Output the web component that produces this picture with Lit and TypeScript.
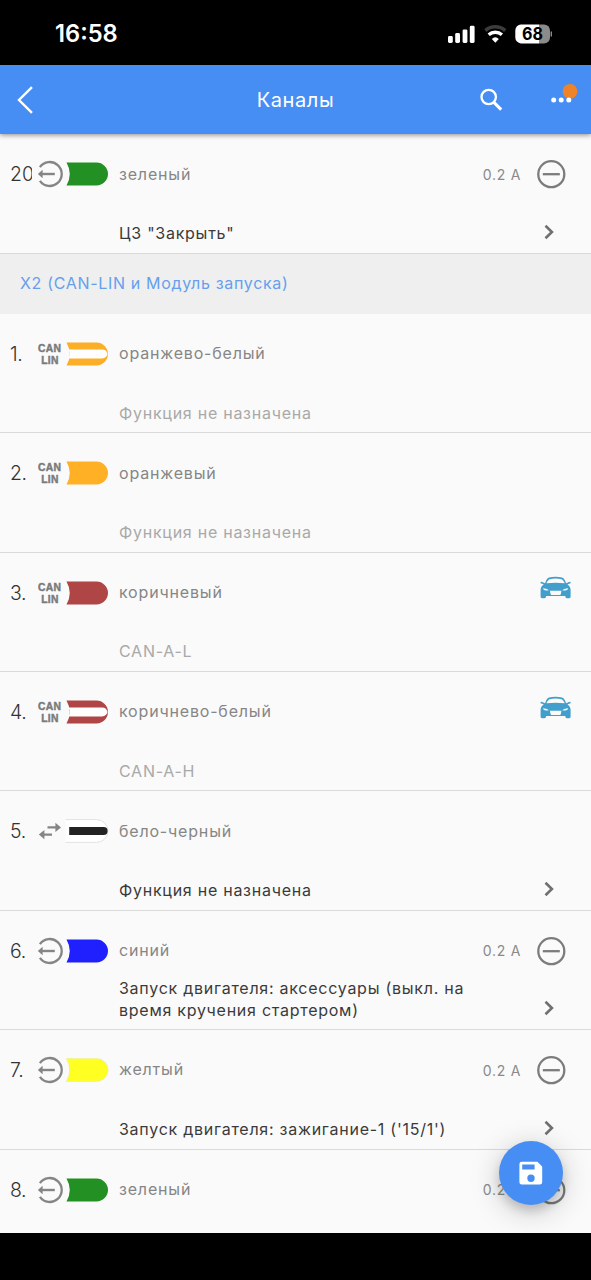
import { LitElement, html, svg, css, nothing } from "lit";
import { customElement, property } from "lit/decorators.js";

type Kind = "out" | "can" | "both";

interface Channel {
  n: string;
  kind: Kind;
  color: string;
  stripe?: string;
  outline?: string;
  name: string;
  fn: string;
  muted?: boolean;
  amps?: string;
  car?: boolean;
}

const BEFORE: Channel[] = [
  { n: "20.", kind: "out", color: "#229022", name: "зеленый", fn: 'ЦЗ "Закрыть"', amps: "0.2 A" },
];

const AFTER: Channel[] = [
  { n: "1.", kind: "can", color: "#fbae26", stripe: "#ffffff", name: "оранжево-белый", fn: "Функция не назначена", muted: true },
  { n: "2.", kind: "can", color: "#ffb024", name: "оранжевый", fn: "Функция не назначена", muted: true },
  { n: "3.", kind: "can", color: "#b04545", name: "коричневый", fn: "CAN-A-L", muted: true, car: true },
  { n: "4.", kind: "can", color: "#b04545", stripe: "#ffffff", name: "коричнево-белый", fn: "CAN-A-H", muted: true, car: true },
  { n: "5.", kind: "both", color: "#ffffff", stripe: "#222222", outline: "#e2e2e2", name: "бело-черный", fn: "Функция не назначена" },
  { n: "6.", kind: "out", color: "#2020ff", name: "синий", fn: "Запуск двигателя: аксессуары (выкл. на время кручения стартером)", amps: "0.2 A" },
  { n: "7.", kind: "out", color: "#ffff22", outline: "#f0f0a0", name: "желтый", fn: "Запуск двигателя: зажигание-1 ('15/1')", amps: "0.2 A" },
  { n: "8.", kind: "out", color: "#229022", name: "зеленый", fn: "", amps: "0.2 A" },
];

@customElement("channel-row")
class ChannelRow extends LitElement {
  @property({ attribute: false }) channel!: Channel;

  static styles = css`
    :host { display: block; }
    .row {
      box-sizing: border-box;
      height: 119.4px;
      border-bottom: 1.4px solid #dadada;
      padding: 24.6px 20px 8px 10px;
      display: flex;
      flex-direction: column;
      justify-content: space-between;
    }
    .top { display: flex; align-items: center; height: 31px; }
    .num {
      width: 21.6px;
      flex: none;
      overflow: hidden;
      white-space: nowrap;
      font-size: 19.4px;
      font-weight: 350;
      line-height: 24px;
      color: #333;
    }
    .num.short { overflow: visible; letter-spacing: -0.3px; }
    .wire { flex: none; display: block; margin-left: 4.4px; }
    .tag {
      font: 700 10.3px/1 "Liberation Sans", sans-serif;
      fill: #7a7a7a;
      stroke: #7a7a7a;
      stroke-width: 0.45px;
      letter-spacing: 0.3px;
    }
    .name {
      flex: 1;
      margin-left: 9px;
      font-size: 16px;
      letter-spacing: 0.82px;
      line-height: 21.5px;
      color: #868686;
      white-space: nowrap;
    }
    .amps { font-size: 14px; letter-spacing: 0.7px; color: #8a8a8a; margin-right: 15px; white-space: nowrap; }
    .minus { display: block; margin-right: 5px; flex: none; }
    .car { display: block; flex: none; margin-top: -9px; }
    .bottom { display: flex; align-items: flex-end; padding-left: 109px; }
    .fn {
      width: 370px;
      font-size: 16px;
      letter-spacing: 0.74px;
      line-height: 21.5px;
      color: #3a3a3a;
    }
    .muted { color: #a9a9a9; }
    .chev { display: block; margin: 0 16px 5px auto; flex: none; }
  `;

  private symbol(kind: Kind) {
    if (kind === "out") {
      return svg`
        <path d="M3.9 8.1A12 12 0 1 1 3.9 21.9" fill="none" stroke="#858585" stroke-width="2.3"/>
        <path d="M18.8 15H5" stroke="#858585" stroke-width="2.4"/>
        <path d="M1.8 15L6.6 10.8V19.2Z" fill="#858585"/>`;
    }
    if (kind === "can") {
      return svg`
        <text class="tag" x="13.6" y="13.4" text-anchor="middle">CAN</text>
        <text class="tag" x="13.9" y="24.6" text-anchor="middle">LIN</text>`;
    }
    return svg`
      <path d="M11.5 11.4H20M6.5 18.6H16" stroke="#858585" stroke-width="2.3"/>
      <path d="M25 11.4L19.4 6.8V16ZM2.8 18.6L8.4 14V23.2Z" fill="#858585"/>`;
  }

  render() {
    const c = this.channel;
    const body = "M30.5 3.6H60.5A11.5 11.4 0 0 1 60.5 26.4H30.5Q37 15 30.5 3.6Z";
    const openBody = "M29.5 3.6H60.5A11.5 11.4 0 0 1 60.5 26.4H29.5";
    return html`
      <div class="row">
        <div class="top">
          <div class="num ${c.n.length < 3 ? "short" : ""}">${c.n}</div>
          <svg class="wire" width="74" height="30" viewBox="0 0 74 30">
            ${this.symbol(c.kind)}
            <path d=${c.kind === "both" ? openBody : body} fill=${c.color} stroke=${c.outline ?? "none"} stroke-width="1"/>
            ${c.stripe
              ? c.kind === "both"
                ? svg`<path d="M33.2 11H67.6A4 4 0 0 1 67.6 19H33.2Z" fill=${c.stripe}/>`
                : svg`<path d="M32.6 10.6H66C69 10.6 71.5 12.6 72 15C71.5 17.4 69 19.4 66 19.4H32.6Q34.8 15 32.6 10.6Z" fill=${c.stripe}/><path d="M69.9 11.4Q73.3 15 69.9 18.6" fill="none" stroke=${c.color} stroke-width=".5"/>`
              : nothing}
          </svg>
          <div class="name">${c.name}</div>
          ${c.amps
            ? html`<div class="amps">${c.amps}</div>
                <svg class="minus" width="30" height="30" viewBox="0 0 30 30">
                  <circle cx="15.3" cy="15.2" r="13" fill="none" stroke="#7c7c7c" stroke-width="2.3"/>
                  <path d="M6.8 15.2H23.8" stroke="#7c7c7c" stroke-width="2.3"/>
                </svg>`
            : nothing}
          ${c.car
            ? html`<svg class="car" width="31" height="24" viewBox="0 0 31 24">
                <path fill="#429ecb" fill-rule="evenodd" d="M9 1.6C13 .5 18 .5 22 1.6C24.2 2.3 25.2 5 26.2 7.2L29.6 5.7C31 5.5 31 7.3 30 7.6L27.4 8.3C29.4 9.8 30.6 11.6 30.6 14V21C30.6 22.8 25.4 22.8 25.4 21V20H6V21C6 22.8 .6 22.8 .6 21V14C.6 11.6 1.8 9.8 3.8 8.3L1.2 7.6C.2 7.3 .2 5.5 1.6 5.7L5 7.2C6 5 6.8 2.3 9 1.6ZM9.6 3.2C8 3.8 7.2 5.6 6.5 7.3Q15.6 6.3 24.7 7.3C24 5.6 23.2 3.8 21.6 3.2Q15.6 1.9 9.6 3.2ZM3 12.2Q3.2 14.6 7.6 14.6L9 14.2Q6.6 12.4 3 12.2ZM28.2 12.2Q28 14.6 23.6 14.6L22.2 14.2Q24.6 12.4 28.2 12.2ZM10 14.8L10.6 18.2Q10.8 19 11.6 19H19.8Q20.6 19 20.8 18.2L21.4 14.8Z"/>
              </svg>`
            : nothing}
        </div>
        <div class="bottom">
          <div class="fn ${c.muted ? "muted" : ""}">${c.fn}</div>
          ${c.fn && !c.muted
            ? html`<svg class="chev" width="12" height="16" viewBox="0 0 12 16">
                <path d="M2.5 1.8L8.9 8L2.5 14.2" fill="none" stroke="#707070" stroke-width="2.6"/>
              </svg>`
            : nothing}
        </div>
      </div>`;
  }
}

@customElement("app-root")
class AppRoot extends LitElement {
  static styles = css`
    :host {
      display: flex;
      flex-direction: column;
      position: relative;
      width: 591px;
      height: 1280px;
      overflow: hidden;
      background: #000;
      font-family: Inter, "Liberation Sans", sans-serif;
    }
    .status {
      flex: none;
      height: 65px;
      box-sizing: border-box;
      padding: 2px 39px 0 55px;
      display: flex;
      align-items: center;
      color: #fff;
    }
    .time { flex: 1; font-size: 23.7px; font-weight: 600; }
    .icons { display: block; }
    .pct { font: 700 18px/1 Inter, "Liberation Sans", sans-serif; fill: #000; }
    .bar {
      flex: none;
      height: 69.4px;
      box-sizing: border-box;
      background: #468ef3;
      box-shadow: 0 1px 5px rgba(0, 0, 0, 0.45);
      display: grid;
      grid-template-columns: 1fr auto 1fr;
      align-items: center;
      color: #fff;
      z-index: 1;
    }
    .back { display: block; margin-left: 16px; }
    .title { font-size: 20px; letter-spacing: 0.6px; line-height: 26px; }
    .actions { display: block; justify-self: end; }
    .list { flex: none; height: 1098.2px; overflow: hidden; background: #fafafa; }
    .section {
      height: 60px;
      box-sizing: border-box;
      display: flex;
      align-items: center;
      padding: 0 0 1.4px 20px;
      background: #efefef;
      color: #659fee;
      font-size: 16px;
      letter-spacing: 0.67px;
    }
    .fab {
      position: absolute;
      left: 499px;
      top: 1141px;
      width: 64px;
      height: 64px;
      border: 0;
      padding: 0;
      border-radius: 50%;
      background: #468ef3;
      display: grid;
      place-items: center;
      box-shadow: 0 6px 10px rgba(0, 0, 0, 0.14), 0 6px 30px rgba(0, 0, 0, 0.22);
      z-index: 2;
    }
    .foot { flex: 1; background: #000; z-index: 3; }
  `;

  render() {
    return html`
      <div class="status">
        <div class="time">16:58</div>
        <svg class="icons" width="106" height="24" viewBox="0 0 106 24">
          <g fill="#fff">
            <rect x="2" y="14" width="4.8" height="7" rx="1.4"/>
            <rect x="9.2" y="11" width="4.8" height="10" rx="1.4"/>
            <rect x="16.6" y="7.4" width="4.8" height="13.6" rx="1.4"/>
            <rect x="23.8" y="3.7" width="4.8" height="17.3" rx="1.4"/>
          </g>
          <path d="M39.4 8.6A15 15 0 0 1 59.2 8.6" fill="none" stroke="#3c3c3c" stroke-width="3.5"/>
          <path d="M42.7 12.8A10 10 0 0 1 55.9 12.8" fill="none" stroke="#fff" stroke-width="3.5"/>
          <path d="M45.8 17Q49.3 13.6 52.8 17L49.3 20.8Z" fill="#fff"/>
          <path d="M75 2.4H93V21.4H75A6 6 0 0 1 69.3 15.4V8.4A6 6 0 0 1 75 2.4Z" fill="#fff"/>
          <path d="M93 2.4H98A6 6 0 0 1 104 8.4V15.4A6 6 0 0 1 98 21.4H93Z" fill="#8b8b8b"/>
          <path d="M105.3 9.4V14.6" stroke="#8b8b8b" stroke-width="1.4"/>
          <text class="pct" x="86.6" y="18.3" text-anchor="middle" textLength="21" lengthAdjust="spacingAndGlyphs">68</text>
        </svg>
      </div>
      <div class="bar">
        <svg class="back" width="20" height="30" viewBox="0 0 20 30">
          <path d="M16 2.2L3 15L16 27.8" fill="none" stroke="#fff" stroke-width="2.4"/>
        </svg>
        <div class="title">Каналы</div>
        <svg class="actions" width="116" height="40" viewBox="0 0 116 40">
          <circle cx="13.7" cy="17" r="7.2" fill="none" stroke="#fff" stroke-width="2.3"/>
          <path d="M18.9 22.3L26.2 29.6" stroke="#fff" stroke-width="3.1"/>
          <circle cx="78.7" cy="20" r="2.5" fill="#fff"/>
          <circle cx="86.2" cy="20" r="2.5" fill="#fff"/>
          <circle cx="95" cy="11.3" r="7.4" fill="#ee8427"/>
          <circle cx="93.8" cy="20" r="2.5" fill="#fff"/>
        </svg>
      </div>
      <div class="list">
        ${BEFORE.map((c) => html`<channel-row .channel=${c}></channel-row>`)}
        <div class="section">X2 (CAN-LIN и Модуль запуска)</div>
        ${AFTER.map((c) => html`<channel-row .channel=${c}></channel-row>`)}
      </div>
      <div class="foot"></div>
      <button class="fab" aria-label="Сохранить">
        <svg width="24" height="24" viewBox="0 0 24 24">
          <path fill="#fff" fill-rule="evenodd" d="M2.8 .8H18.4L23.2 5.6V21.2A2.4 2.4 0 0 1 20.8 23.6H2.8A2.4 2.4 0 0 1 .4 21.2V3.2A2.4 2.4 0 0 1 2.8 .8ZM3.2 3.4V8.4H15.6V3.4ZM12 13.6A3.7 3.7 0 1 0 12 21A3.7 3.7 0 1 0 12 13.6Z"/>
        </svg>
      </button>
    `;
  }
}
